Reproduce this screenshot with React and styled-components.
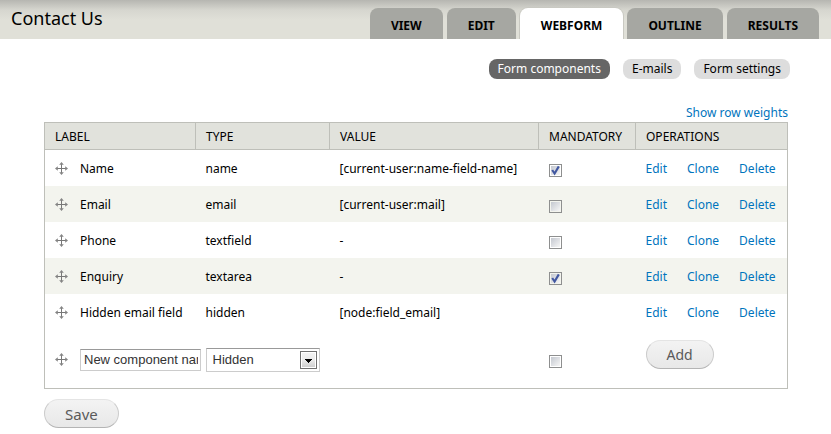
import React, { useState } from 'react'
import styled, { createGlobalStyle } from 'styled-components'

const CHECK_MARK = `url("data:image/svg+xml,%3Csvg xmlns='http://www.w3.org/2000/svg' width='13' height='13' viewBox='0 0 13 13'%3E%3Cpath d='M3.2 6 L5.6 9.6 L9.8 2.4' fill='none' stroke='%234157a0' stroke-width='2.1'/%3E%3C/svg%3E")`

const SELECT_ARROW = `url("data:image/svg+xml,%3Csvg xmlns='http://www.w3.org/2000/svg' width='17' height='18' viewBox='0 0 17 18'%3E%3Cdefs%3E%3ClinearGradient id='g' x1='0' y1='0' x2='0' y2='1'%3E%3Cstop offset='0' stop-color='%23f2f2f2'/%3E%3Cstop offset='.5' stop-color='%23ebebeb'/%3E%3Cstop offset='1' stop-color='%23cfcfcf'/%3E%3C/linearGradient%3E%3C/defs%3E%3Crect x='.5' y='.5' width='16' height='17' fill='%23fff' stroke='%23707070'/%3E%3Crect x='2' y='2' width='13' height='14' fill='url(%23g)'/%3E%3Cpath d='M5 8h7v1h-1v1h-1v1h-1v1h-1v-1h-1v-1h-1v-1h-1z' fill='%23000'/%3E%3C/svg%3E")`

const GlobalStyle = createGlobalStyle`
    body {
        margin: 0;
        background: #fff;
        color: #000;
        font-family: 'Noto Sans', 'Open Sans', sans-serif;
        font-size: 12px;
    }
`

const Header = styled.header`
    display: flex;
    justify-content: space-between;
    align-items: flex-end;
    height: 39px;
    padding: 0 12px 0 11px;
    box-sizing: border-box;
    overflow: hidden;
    background: linear-gradient(#b6b6b1, #d6d6cf 10px, #e0e0d8 20px);
`

const Title = styled.h1`
    margin: 0;
    align-self: flex-start;
    font-size: 18px;
    font-weight: 400;
    line-height: 36px;
`

const Tabs = styled.nav`
    display: flex;
    gap: 4px;
`

const Tab = styled.a`
    padding: 0 21px;
    border-radius: 8px 8px 0 0;
    background: ${({ $active }) => ($active ? '#fff' : '#a6a7a2')};
    box-shadow: ${({ $active }) => ($active ? '0 0 0 1px #c9c9c2' : 'none')};
    color: #000;
    font-size: 12px;
    font-weight: 700;
    line-height: 35px;
    height: 31px;
    text-decoration: none;
    text-transform: uppercase;
`

const SubTabs = styled.nav`
    display: flex;
    justify-content: flex-end;
    gap: 13px;
    padding: 20px 41px 0;
`

const SubTab = styled.a`
    padding: 0 9px;
    border-radius: 8px;
    background: ${({ $active }) => ($active ? '#666' : '#ddd')};
    color: ${({ $active }) => ($active ? '#fff' : '#000')};
    line-height: 20px;
    text-decoration: none;
`

const Main = styled.main`
    padding: 24px 43px 6px 44px;
`

const Link = styled.a`
    color: #0074bd;
    text-decoration: none;
`

const WeightsRow = styled.div`
    line-height: 19px;
    text-align: right;
`

const Table = styled.table`
    width: 100%;
    table-layout: fixed;
    border-collapse: collapse;
    border: 1px solid #bebfb9;
`

const Col = styled.col`
    width: ${({ $width }) => $width};
`

const HeadCell = styled.th`
    height: 26px;
    padding: 0 10px;
    border: 1px solid #bebfb9;
    background: #e1e2dc;
    font-weight: 400;
    text-align: left;
    text-transform: uppercase;
`

const Row = styled.tr`
    height: ${({ $tall }) => ($tall ? '59px' : '36px')};
    background: ${({ $striped }) => ($striped ? '#f3f4ee' : '#fff')};
`

const Cell = styled.td`
    padding: 2px 5px 0 10px;
    white-space: nowrap;
`

const AddCell = styled(Cell)`
    padding-bottom: 10px;
`

const LabelBox = styled.div`
    display: flex;
    align-items: center;
    gap: 12px;
`

const Operations = styled.div`
    display: flex;
    gap: 20px;
`

const Handle = styled.svg`
    flex: none;
    width: 13px;
    height: 13px;
`

const Checkbox = styled.input`
    appearance: none;
    display: block;
    width: 13px;
    height: 13px;
    margin: 3px 0 0;
    border: 1px solid #8e8f8f;
    background: linear-gradient(135deg, #c4c8d0, #f6f6f6) content-box #f4f4f4;
    padding: 1px;

    &:checked {
        background: ${CHECK_MARK} center / 13px 13px no-repeat border-box,
            linear-gradient(135deg, #c4c8d0, #f6f6f6) content-box #f4f4f4;
    }
`

const TextInput = styled.input`
    box-sizing: border-box;
    width: 121px;
    height: 22px;
    padding: 0 2px 0 3px;
    border: 1px solid #ccc;
    border-top-color: #999;
    background: #fff;
    color: #333;
    font-family: 'Liberation Sans', Arial, sans-serif;
    font-size: 13px;
`

const Select = styled.select`
    appearance: none;
    box-sizing: border-box;
    display: block;
    width: 114px;
    height: 24px;
    padding: 0 20px 0 6px;
    border: 1px solid #ccc;
    border-top-color: #999;
    border-radius: 0;
    background: ${SELECT_ARROW} right 2px center no-repeat #fff;
    color: #333;
    font-family: 'Liberation Sans', Arial, sans-serif;
    font-size: 13px;
`

const Button = styled.button`
    display: block;
    height: 29px;
    padding: 0 20px;
    border: 1px solid #ccc;
    border-top-color: #e4e4e4;
    border-bottom-color: #b4b4b4;
    border-radius: 15px;
    background: linear-gradient(#f3f3f3, #e8e8e8);
    color: #5a5a5a;
    font-family: inherit;
    font-size: ${({ $large }) => ($large ? '15px' : '14px')};
`

const Actions = styled.div`
    margin-top: 10px;
`

const tabs = ['View', 'Edit', 'Webform', 'Outline', 'Results']
const subTabs = ['Form components', 'E-mails', 'Form settings']
const columns = ['Label', 'Type', 'Value', 'Mandatory', 'Operations']

const components = [
    { label: 'Name', type: 'name', value: '[current-user:name-field-name]', mandatory: true },
    { label: 'Email', type: 'email', value: '[current-user:mail]', mandatory: false },
    { label: 'Phone', type: 'textfield', value: '-', mandatory: false },
    { label: 'Enquiry', type: 'textarea', value: '-', mandatory: true },
    { label: 'Hidden email field', type: 'hidden', value: '[node:field_email]' },
]

function DragHandle() {
    return (
        <Handle viewBox="0 0 13 13" aria-hidden="true">
            <path d="M6 2h1v4h4v1H7v4H6V7H2V6h4z" fill="#777" />
            <path
                d="M6.5 0L8.8 2.8H4.2zM6.5 13L4.2 10.2h4.6zM0 6.5L2.8 4.2v4.6zM13 6.5L10.2 8.8V4.2z"
                fill="#858585"
            />
        </Handle>
    )
}

function ComponentRow({ data, striped }) {
    const hasMandatory = data.mandatory !== undefined

    return (
        <Row $striped={striped}>
            <Cell>
                <LabelBox>
                    <DragHandle />
                    {data.label}
                </LabelBox>
            </Cell>
            <Cell>{data.type}</Cell>
            <Cell>{data.value}</Cell>
            <Cell>
                {hasMandatory && (
                    <Checkbox
                        type="checkbox"
                        aria-label={`${data.label} mandatory`}
                        defaultChecked={data.mandatory}
                    />
                )}
            </Cell>
            <Cell>
                <Operations>
                    <Link href="#edit">Edit</Link>
                    <Link href="#clone">Clone</Link>
                    <Link href="#delete">Delete</Link>
                </Operations>
            </Cell>
        </Row>
    )
}

function NewComponentRow() {
    const [name, setName] = useState('New component name')

    return (
        <Row $tall>
            <Cell>
                <LabelBox>
                    <DragHandle />
                    <TextInput
                        type="text"
                        aria-label="New component name"
                        value={name}
                        onChange={(e) => setName(e.target.value)}
                    />
                </LabelBox>
            </Cell>
            <Cell>
                <Select aria-label="Type" defaultValue="hidden">
                    <option value="hidden">Hidden</option>
                </Select>
            </Cell>
            <Cell />
            <Cell>
                <Checkbox type="checkbox" aria-label="New component mandatory" />
            </Cell>
            <AddCell>
                <Button type="button">Add</Button>
            </AddCell>
        </Row>
    )
}

function App() {
    return (
        <>
            <GlobalStyle />
            <Header>
                <Title>Contact Us</Title>
                <Tabs>
                    {tabs.map((tab) => (
                        <Tab key={tab} href="#tab" $active={tab === 'Webform'}>
                            {tab}
                        </Tab>
                    ))}
                </Tabs>
            </Header>
            <SubTabs>
                {subTabs.map((tab, i) => (
                    <SubTab key={tab} href="#subtab" $active={i === 0}>
                        {tab}
                    </SubTab>
                ))}
            </SubTabs>
            <Main>
                <WeightsRow>
                    <Link href="#weights">Show row weights</Link>
                </WeightsRow>
                <Table>
                    <colgroup>
                        <Col $width="151px" />
                        <Col $width="134px" />
                        <Col />
                        <Col $width="97px" />
                        <Col $width="152px" />
                    </colgroup>
                    <thead>
                        <tr>
                            {columns.map((column) => (
                                <HeadCell key={column} scope="col">
                                    {column}
                                </HeadCell>
                            ))}
                        </tr>
                    </thead>
                    <tbody>
                        {components.map((data, i) => (
                            <ComponentRow
                                key={data.label}
                                data={data}
                                striped={i % 2 === 1}
                            />
                        ))}
                        <NewComponentRow />
                    </tbody>
                </Table>
                <Actions>
                    <Button type="button" $large>
                        Save
                    </Button>
                </Actions>
            </Main>
        </>
    )
}

export default App
